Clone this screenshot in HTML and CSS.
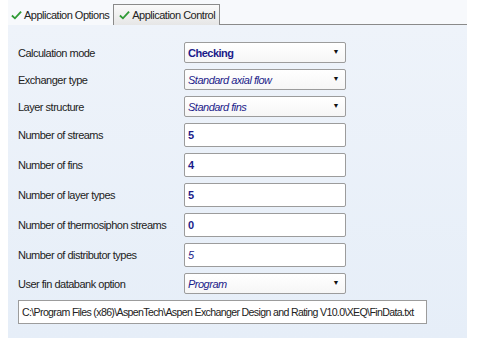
FILE: index.html
```html
<!DOCTYPE html>
<html lang="en">
<head>
    <meta charset="UTF-8">
    <title>Application Options</title>
    <link rel="stylesheet" href="styles.css">
</head>
<body>

<div class="window">
    <div class="tabs">
        <div class="tab active">
            <svg class="check" viewBox="0 0 12 10" width="11" height="10"><path d="M1 5.5 L4.3 8.6 L11 1.2" fill="none" stroke="#2f9a35" stroke-width="2"/></svg>
            <span>Application Options</span>
        </div>
        <div class="tab">
            <svg class="check" viewBox="0 0 12 10" width="11" height="10"><path d="M1 5.5 L4.3 8.6 L11 1.2" fill="none" stroke="#2f9a35" stroke-width="2"/></svg>
            <span>Application Control</span>
        </div>
        <div class="tab-fill"></div>
    </div>

    <div class="panel">
        <div class="row">
            <label>Calculation mode</label>
            <div class="field select bold">Checking<span class="arrow">▼</span></div>
        </div>
        <div class="row">
            <label>Exchanger type</label>
            <div class="field select italic">Standard axial flow<span class="arrow">▼</span></div>
        </div>
        <div class="row">
            <label>Layer structure</label>
            <div class="field select italic">Standard fins<span class="arrow">▼</span></div>
        </div>
        <div class="row">
            <label>Number of streams</label>
            <div class="field input bold">5</div>
        </div>
        <div class="row">
            <label>Number of fins</label>
            <div class="field input bold">4</div>
        </div>
        <div class="row">
            <label>Number of layer types</label>
            <div class="field input bold">5</div>
        </div>
        <div class="row">
            <label>Number of thermosiphon streams</label>
            <div class="field input bold">0</div>
        </div>
        <div class="row">
            <label>Number of distributor types</label>
            <div class="field input italic">5</div>
        </div>
        <div class="row">
            <label>User fin databank option</label>
            <div class="field select italic">Program<span class="arrow">▼</span></div>
        </div>
        <div class="path">C:\Program Files (x86)\AspenTech\Aspen Exchanger Design and Rating V10.0\XEQ\FinData.txt</div>
    </div>
</div>

</body>
</html>
```

FILE: styles.css
```css
body {
    margin: 0;
    background: #ffffff;
    font-family: "Liberation Sans", Arial, sans-serif;
    font-size: 11px;
    letter-spacing: -0.5px;
    color: #222;
}
.window {
    width: 459px;
    margin-left: 8px;
}
.tabs {
    display: flex;
    align-items: flex-end;
    height: 25px;
    background: #f7f9fc;
}
.tab {
    display: flex;
    align-items: center;
    gap: 2px;
    height: 20px;
    padding: 0 4px 0 5px;
    box-sizing: border-box;
    white-space: nowrap;
}
.tab.active {
    padding-left: 3px;
    margin-right: 0;
}
.tab:not(.active) {
    border: 1px solid #8a8a8a;
    border-bottom: none;
    background: linear-gradient(#fafafa, #e6e6e6);
    height: 21px;
}
.tab span {
    font-size: 11px;
}
.tab-fill {
    flex: 1;
    border-bottom: 1px solid #8a8a8a;
}
.panel {
    background: linear-gradient(#eef3fa, #e6eef8);
    padding: 17px 0 14px 10px;
    display: flex;
    flex-direction: column;
    gap: 6px;
}
.row {
    display: flex;
    align-items: center;
}
.row label {
    width: 166px;
    white-space: nowrap;
}
.field {
    width: 162px;
    box-sizing: border-box;
    background: #fff;
    border: 1px solid #9c9c9c;
    border-radius: 2px;
    color: #1c1c8a;
    padding-left: 3px;
    display: flex;
    align-items: center;
}
.select {
    height: 21px;
    position: relative;
    background: linear-gradient(#ffffff, #f6f6f6);
}
.input {
    height: 24px;
}
.bold {
    font-weight: bold;
}
.italic {
    font-style: italic;
}
.arrow {
    position: absolute;
    right: 6px;
    top: 5px;
    font-size: 7px;
    font-style: normal;
    color: #111;
}
.path {
    width: 409px;
    height: 24px;
    box-sizing: border-box;
    border: 1px solid #9c9c9c;
    background: #fff;
    padding-left: 3px;
    display: flex;
    align-items: center;
    color: #222;
    font-size: 10.6px;
    letter-spacing: -0.65px;
    white-space: nowrap;
    overflow: hidden;
}
```
